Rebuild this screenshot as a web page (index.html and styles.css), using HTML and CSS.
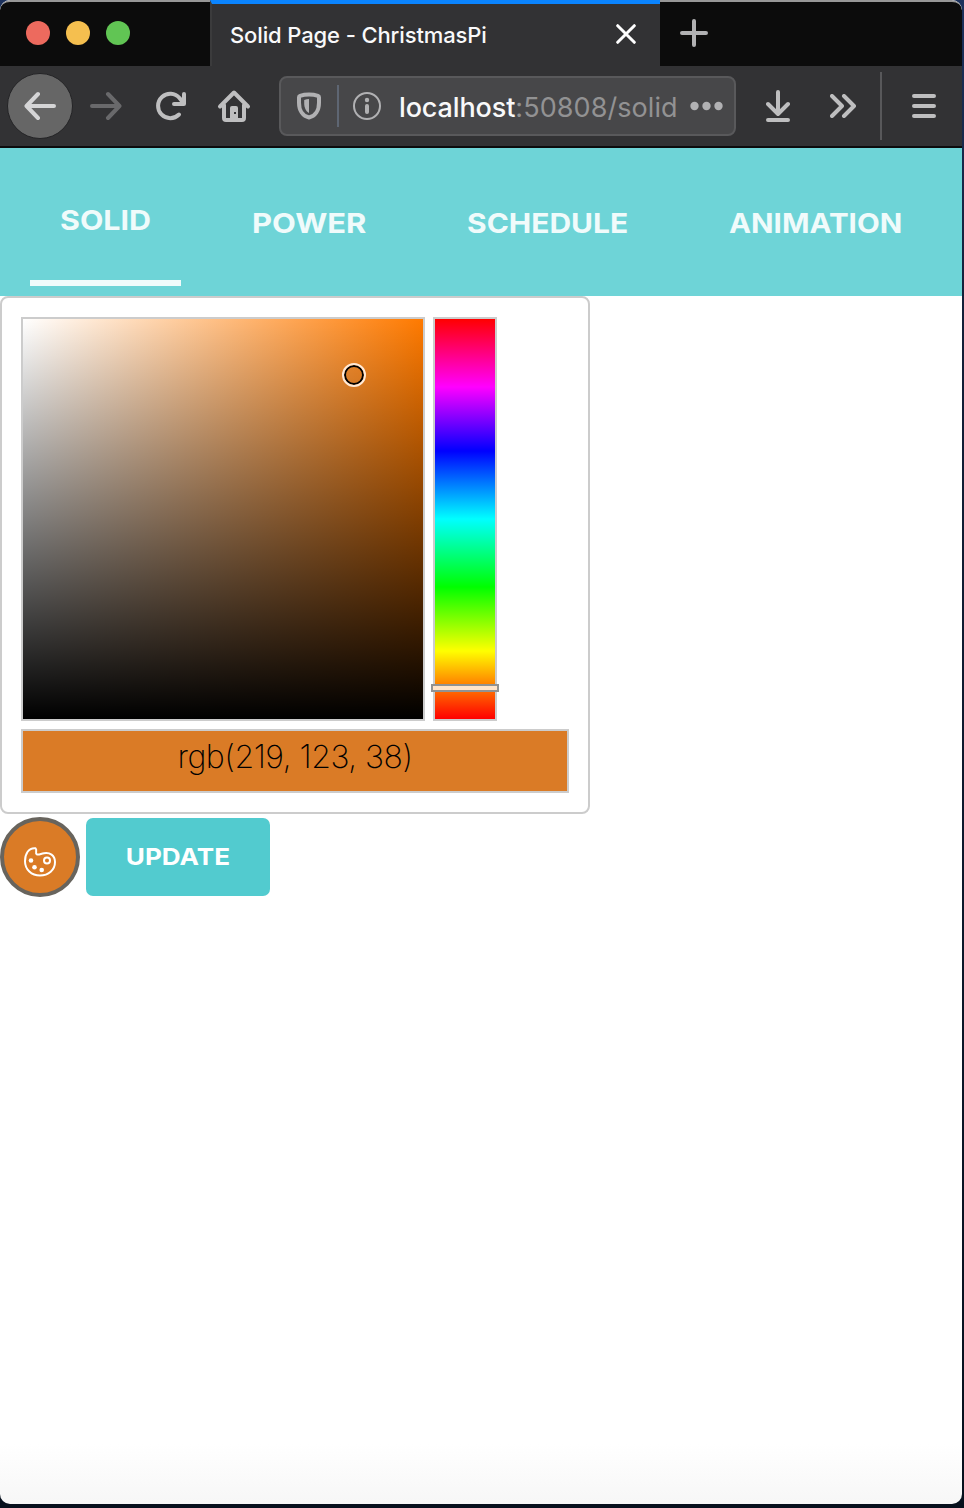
FILE: index.html
```html
<!DOCTYPE html>
<html lang="en">
<head>
<meta charset="utf-8">
<title>Solid Page - ChristmasPi</title>
<link rel="stylesheet" href="styles.css">
</head>
<body>
<div class="window">
  <header class="tabbar">
    <div class="lights"><i class="light red"></i><i class="light yellow"></i><i class="light green"></i></div>
    <div class="tab"><span class="tab-title">Solid Page - ChristmasPi</span>
      <svg class="close" width="20" height="20" viewBox="0 0 20 20"><path d="M1.7 1.7 18.3 18.3M18.3 1.7 1.7 18.3"/></svg>
    </div>
    <svg class="plus" width="28" height="28" viewBox="0 0 28 28"><path d="M14 2v24M2 14h24"/></svg>
  </header>
  <div class="toolbar">
    <div class="back"><svg width="32" height="32" viewBox="0 0 32 32"><path d="M30 16H3M14 4 2.5 16 14 28"/></svg></div>
    <svg class="icon forward" width="32" height="32" viewBox="0 0 32 32"><path d="M2 16h27M18 4l11.5 12L18 28"/></svg>
    <svg class="icon reload" width="32" height="32" viewBox="0 0 32 32"><path d="M24 24.500A12.200 12.200 0 1 1 24.500 8L28 12.500M29 4v10H19"/></svg>
    <svg class="icon home" width="34" height="34" viewBox="0 0 34 34"><path d="M3 17.500 17 3.500 31 17.500M7 16V29Q7 31 9 31H25Q27 31 27 29V16"/><path class="fill" d="M13 31V19q0-2 2-2h4q2 0 2 2v12z"/><path class="knob" d="M17 23h2v2h-2z"/></svg>
    <div class="urlbar">
      <svg class="shield" width="26" height="30" viewBox="0 0 26 30"><path class="ring" d="M13 3.500C9.500 3.500 6.500 4 4 4.800c-.8.300-1 .7-1 1.500v5.500c0 8 4 13.500 10 14.700C19 25.300 23 19.800 23 11.800v-5.500c0-.800-.200-1.200-1-1.500C19.500 4 16.500 3.500 13 3.500z"/><path class="fill" d="M13 8v14c-3-1.500-4.800-5.500-4.800-9.500V9C9.800 8.400 11.500 8.100 13 8z"/></svg>
      <span class="split"></span>
      <svg class="info" width="28" height="28" viewBox="0 0 28 28"><circle class="ring" cx="14" cy="14" r="13"/><circle class="fill" cx="14" cy="8" r="2.200"/><path class="stem" d="M14 14v6"/></svg>
      <span class="url"><b>localhost</b>:50808/solid</span>
      <svg class="dots" width="33" height="10" viewBox="0 0 33 10"><circle cx="4.500" cy="5" r="4.200"/><circle cx="16.500" cy="5" r="4.200"/><circle cx="28.500" cy="5" r="4.200"/></svg>
    </div>
    <svg class="icon download" width="24" height="32" viewBox="0 0 24 32"><path d="M12 2v21M2 14l10 10 10-10M2 30h20"/></svg>
    <svg class="icon more" width="28" height="24" viewBox="0 0 28 24"><path d="M2 2l10 10L2 22M14 2l10 10-10 10"/></svg>
    <span class="rule"></span>
    <svg class="icon menu" width="24" height="24" viewBox="0 0 24 24"><path d="M2 2h20M2 12h20M2 22h20"/></svg>
  </div>
  <nav class="nav">
    <a class="link active"><span class="t1">SOLID</span></a>
    <a class="link"><span class="t2">POWER</span></a>
    <a class="link"><span class="t3">SCHEDULE</span></a>
    <a class="link"><span class="t4">ANIMATION</span></a>
  </nav>
  <main>
    <section class="picker">
      <div class="areas">
        <div class="shade"><i class="cursor"></i></div>
        <div class="hue"><i class="slider"></i></div>
      </div>
      <div class="value"><span>rgb(219, 123, 38)</span></div>
    </section>
    <div class="actions">
      <button class="swatch"><svg width="34" height="32" viewBox="0 0 34 32"><path d="M12.500 2.200C5.500 1.500 2 8 2 15.200 2 23.500 8.500 29.500 17 29.500s15-5.500 15-13.500c0-7-5.500-9.800-11-8.800-3.500.700-5.500 2-7.200 1.200-2.100-1.200.8-4.500-1.300-6.200z"/><circle cx="24" cy="14.500" r="3"/><circle class="dot" cx="8" cy="14.500" r="2.300"/><circle class="dot" cx="11.500" cy="21.300" r="2.300"/><circle class="dot" cx="18.700" cy="24" r="2.300"/></svg></button>
      <button class="update"><span>UPDATE</span></button>
    </div>
  </main>
</div>
</body>
</html>
```
FILE: styles.css
```css
* { box-sizing: border-box; }
body { margin: 0; height: 1508px; background: linear-gradient(#1c315c, #142039 20%, #07101d); overflow: hidden; font-family: Inter, "Liberation Sans", sans-serif; }
svg { display: block; flex: none; fill: none; stroke-linecap: round; stroke-linejoin: round; }
.window { width: 962px; height: 1504px; border-radius: 10px; overflow: hidden; background: linear-gradient(#fff 96%, #f7f7f7); }
.tabbar { height: 66px; display: flex; background: #0c0c0c; border-top: 2px solid #989898; border-radius: 10px 10px 0 0; }
.lights { width: 210px; display: flex; gap: 16px; padding: 19px 0 0 26px; }
.light { width: 24px; height: 24px; border-radius: 50%; }
.red { background: #ed6a5e; }
.yellow { background: #f5bf4f; }
.green { background: #61c554; }
.tab { width: 450px; height: 66px; margin-top: -2px; background: #323234; border-left: 2px solid #3b3b3c; border-top: 4px solid #0a84ff; display: flex; align-items: center; justify-content: space-between; padding: 0 24px 0 18px; color: #f9f9fa; }
.tab-title { font-size: 22px; font-weight: 500; letter-spacing: -0.12px; white-space: nowrap; margin-top: -1px; }
.close { stroke: #fff; stroke-width: 3; margin-top: -2px; }
.plus { stroke: #b1b1b3; stroke-width: 4; margin: 17px 0 0 20px; }
.toolbar { height: 82px; background: #323234; border-bottom: 2px solid #0c0c0d; display: flex; align-items: center; padding-left: 7px; }
.back { width: 66px; height: 66px; border-radius: 50%; background: #666; border: 1px solid #242426; display: flex; align-items: center; justify-content: center; flex: none; }
.back svg { stroke: #d5d5d6; stroke-width: 4; }
.icon { stroke: #bebebf; stroke-width: 4; }
.forward { margin-left: 17px; stroke: #69696b; }
.reload { margin-left: 33px; }
.home { margin-left: 30px; }
.home .fill { fill: #bebebf; stroke: none; }
.home .knob { fill: #323234; stroke: none; }
.urlbar { width: 457px; height: 60px; margin-left: 28px; border: 2px solid #59595b; border-radius: 8px; background: #474749; display: flex; align-items: center; padding-left: 15px; flex: none; }
.shield .ring { stroke: #b1b1b3; stroke-width: 4; }
.shield .fill, .info .fill { fill: #b1b1b3; }
.split { width: 2px; height: 42px; background: #5e6673; margin: 0 14px 0 15px; flex: none; }
.info .ring { stroke: #b1b1b3; stroke-width: 2; }
.stem { stroke: #b1b1b3; stroke-width: 4; }
.url { width: 291px; margin-left: 18px; white-space: nowrap; font-size: 27px; letter-spacing: 0.08px; color: #929293; padding-top: 2px; flex: none; }
.url b { font-weight: 500; letter-spacing: -0.12px; color: #f9f9fa; }
.dots { fill: #b1b1b3; }
.download { margin-left: 30px; }
.more { margin-left: 40px; }
.rule { width: 2px; height: 68px; background: #58585a; margin-left: 22px; }
.menu { margin-left: 30px; }
.nav { height: 148px; background: #6ed4d7; display: flex; align-items: flex-start; gap: 41px; padding: 10px 30px 0; }
.link { height: 128px; padding: 1px 30px 0; display: flex; align-items: center; color: #f0fbfb; font-size: 27.5px; font-weight: 700; white-space: nowrap; }
.link span { display: block; transform-origin: left; }
.active { border-bottom: 6px solid #f0fbfb; }
.t1 { width: 91px; transform: scaleX(1.105); }
.t2 { width: 114px; transform: scaleX(1.125); }
.t3 { width: 161px; transform: scaleX(1.09); }
.t4 { width: 172px; transform: scaleX(1.075); }
.picker { width: 590px; height: 518px; border: 2px solid #ccc; border-radius: 8px; padding: 19px; background: #fff; }
.areas { display: flex; gap: 8px; }
.shade { position: relative; width: 404px; height: 404px; border: 2px solid #ccc; background: linear-gradient(to top, #000, transparent), linear-gradient(to right, #fff, #ff7a00); }
.cursor { position: absolute; left: 319px; top: 44px; width: 24px; height: 24px; border-radius: 50%; border: 2px solid #ffe9d6; box-shadow: inset 0 0 0 2px #000; }
.hue { position: relative; width: 64px; height: 404px; border: 2px solid #ccc; background: linear-gradient(#f00, #f0f 17%, #00f 33%, #0ff 50%, #0f0 67%, #ff0 83%, #f00); }
.slider { position: absolute; left: -4px; top: 365px; width: 68px; height: 8px; border: 2px solid #929292; background: #ffe4cb; }
.value { width: 548px; height: 64px; margin-top: 8px; border: 2px solid #ccc; background: #da7b26; display: flex; justify-content: center; padding-top: 3px; font-family: Inter, sans-serif; font-weight: 200; font-size: 32px; letter-spacing: -0.5px; line-height: 46px; white-space: nowrap; }
.actions { display: flex; gap: 6px; padding-top: 3px; }
.swatch { width: 80px; height: 80px; border: 4px solid #68645d; border-radius: 50%; background: #da7b26; padding: 10px 0 0; display: flex; align-items: center; justify-content: center; }
.swatch svg { stroke: #fff; stroke-width: 2; }
.swatch .dot { fill: #fff; stroke: none; }
.update { width: 184px; height: 78px; margin-top: 1px; padding: 0 0 2px; border: 0; border-radius: 7px; background: #52cbcf; color: #fff; font: 700 23.5px Inter, sans-serif; }
.update span { display: inline-block; transform: scaleX(1.11); }
```
